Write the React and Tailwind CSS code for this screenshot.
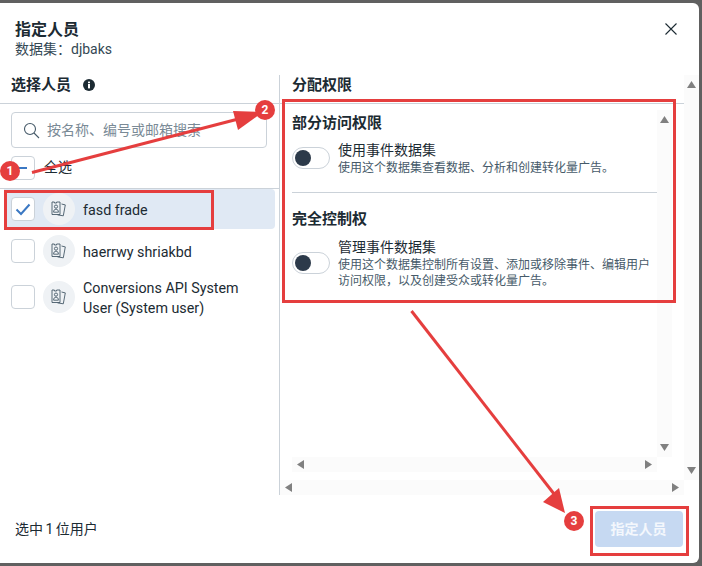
import React from 'react';

const FONT = 'font-["Roboto","Noto_Sans_CJK_SC",sans-serif]';

function PersonIcon() {
  return (
    <svg width="16" height="16" viewBox="0 0 16 16" fill="none" stroke="#465a69" strokeWidth="0.9">
      <path d="M1 1h2.4v1h2.2V1H9v12.5H1z" />
      <circle cx="5" cy="5.6" r="1.6" />
      <path d="M2.6 11.2c0-2 .9-3 2.4-3s2.4 1 2.4 3z" />
      <path d="M10.5 3l3.8.9-2 10.9-5.8-.9" />
    </svg>
  );
}

function Avatar() {
  return (
    <div className="flex h-8 w-8 shrink-0 items-center justify-center rounded-full bg-[#eff2f5]">
      <PersonIcon />
    </div>
  );
}

function Box({ children }) {
  return (
    <div className="flex h-6 w-6 shrink-0 items-center justify-center rounded border border-[#cbd2d9] bg-white">
      {children}
    </div>
  );
}

function Tick() {
  return (
    <svg width="16" height="16" viewBox="0 0 16 16" fill="none" stroke="#3b78c3" strokeWidth="2">
      <path d="M1.5 8.5l4.5 4.5 8.5-9.5" />
    </svg>
  );
}

function Toggle() {
  return (
    <div className="flex h-[22px] w-[38px] shrink-0 items-center rounded-full border border-[#cbd2d9] bg-white pl-[2px]">
      <div className="h-4 w-4 rounded-full bg-[#2c3a4a]" />
    </div>
  );
}

function Arrow({ dir }) {
  const d = {
    up: 'M0 8L4.5 1 9 8z',
    down: 'M0 1h9L4.5 8z',
    left: 'M8 0v9L1 4.5z',
    right: 'M1 0v9l7-4.5z',
  }[dir];
  return (
    <svg width="9" height="9" viewBox="0 0 9 9" fill="#808080">
      <path d={d} />
    </svg>
  );
}

function VBar({ className }) {
  return (
    <div className={`flex w-[15px] shrink-0 flex-col items-center justify-between bg-[#fbfbfb] py-[5px] ${className}`}>
      <Arrow dir="up" />
      <Arrow dir="down" />
    </div>
  );
}

function HBar({ className }) {
  return (
    <div className={`flex h-[15px] shrink-0 items-center justify-between bg-[#fbfbfb] px-[4px] ${className}`}>
      <Arrow dir="left" />
      <Arrow dir="right" />
    </div>
  );
}

function Permission({ title, desc }) {
  return (
    <div className="flex items-center gap-2">
      <Toggle />
      <div className="w-[319px]">
        <div className="text-[14px] leading-5 text-[#1c2b33]">{title}</div>
        <div className="text-[12px] leading-4 text-[#465a69]">{desc}</div>
      </div>
    </div>
  );
}

export default function App() {
  return (
    <div className={`relative h-[566px] w-[702px] overflow-hidden bg-[#606060] pb-[3px] pr-[3px] pt-[3px] ${FONT}`}>
      <div className="flex h-[560px] w-[699px] flex-col rounded-r-md bg-white text-[#1c2b33]">
        <div className="flex h-[72px] shrink-0 items-start justify-between pl-[15px] pr-[21px] pt-[17px]">
          <div>
            <div className="text-[16px] font-bold leading-5">指定人员</div>
            <div className="text-[14px] leading-[18px] text-[#344854]">数据集：djbaks</div>
          </div>
          <svg className="mt-[2px]" width="14" height="14" viewBox="0 0 14 14" stroke="#1c2b33" strokeWidth="1.1">
            <path d="M1.5 1.5l11 11M12.5 1.5l-11 11" />
          </svg>
        </div>

        <div className="flex h-[420px] shrink-0">
          <div className="w-[280px] shrink-0 border-r border-[#cbd2d9]">
            <div className="flex h-[29px] items-center gap-[12px] border-b border-[#cbd2d9] pb-[8px] pl-[11px]">
              <span className="text-[15px] font-bold leading-5">选择人员</span>
              <svg width="12" height="12" viewBox="0 0 12 12">
                <circle cx="6" cy="6" r="6" fill="#1c2b33" />
                <rect x="5" y="5" width="2" height="4.4" fill="#fff" />
                <rect x="5" y="2.6" width="2" height="1.6" fill="#fff" />
              </svg>
            </div>
            <div className="mx-[11px] mt-2 flex h-9 w-[256px] items-center gap-[7px] rounded border border-[#cbd2d9] pl-[11px]">
              <svg width="17" height="17" viewBox="0 0 17 17" fill="none" stroke="#465a69" strokeWidth="1.1">
                <circle cx="7" cy="7" r="5.5" />
                <path d="M11 11l5 5" />
              </svg>
              <span className="text-[14px] text-[#7a8a96]">按名称、编号或邮箱搜索</span>
            </div>
            <div className="flex h-[41px] items-center gap-[9px] border-b border-[#cbd2d9] pb-[1px] pl-[11px]">
              <Box>
                <div className="h-[2px] w-[8px] bg-[#3b78c3]" />
              </Box>
              <span className="text-[14px]">全选</span>
            </div>

            <div className="ml-1 mr-1 flex h-10 items-center gap-2 rounded-r bg-[#e0e9f4] pl-[7px]">
              <Box>
                <Tick />
              </Box>
              <Avatar />
              <span className="pt-[1px] text-[14.3px] leading-5">fasd frade</span>
            </div>
            <div className="flex h-[43px] items-center gap-2 pl-[11px] pt-[1px]">
              <Box />
              <Avatar />
              <span className="pt-[1px] text-[14.3px] leading-5">haerrwy shriakbd</span>
            </div>
            <div className="flex h-[50px] items-center gap-2 pl-[11px]">
              <Box />
              <Avatar />
              <span className="w-[180px] pt-[1px] text-[14.3px] leading-5">Conversions API System User (System user)</span>
            </div>
          </div>

          <div className="flex min-w-0 flex-1 flex-col">
            <div className="flex min-h-0 flex-1">
              <div className="flex w-[404px] shrink-0 flex-col">
                <div className="flex h-[29px] shrink-0 items-center border-b border-[#cbd2d9] pb-[8px] pl-3 text-[15px] font-bold leading-5">
                  分配权限
                </div>
                <div className="flex min-h-0 flex-1 pl-3 pt-[6px]">
                  <div className="flex min-w-0 flex-1 flex-col">
                    <div className="flex min-h-0 flex-1">
                      <div className="w-[365px] shrink-0">
                        <div className="border-b border-[#cbd2d9] pb-4 pt-[2px]">
                          <div className="mb-[6px] text-[15px] font-bold leading-[22px]">部分访问权限</div>
                          <Permission title="使用事件数据集" desc="使用这个数据集查看数据、分析和创建转化量广告。" />
                        </div>
                        <div className="pt-[15px]">
                          <div className="mb-[7px] text-[15px] font-bold leading-[22px]">完全控制权</div>
                          <Permission
                            title="管理事件数据集"
                            desc="使用这个数据集控制所有设置、添加或移除事件、编辑用户访问权限，以及创建受众或转化量广告。"
                          />
                        </div>
                      </div>
                      <VBar />
                    </div>
                    <HBar className="w-[365px]" />
                    <div className="h-2 shrink-0" />
                  </div>
                  <div className="w-3 shrink-0" />
                </div>
              </div>
              <VBar />
            </div>
            <HBar className="w-[404px]" />
          </div>
        </div>

        <div className="flex flex-1 items-center justify-between pl-[15px] pr-4">
          <span className="text-[14px] text-[#1c2b33] [word-spacing:-1px]">选中 1 位用户</span>
          <button
            type="button"
            className="h-9 w-[88px] rounded bg-[#c6d9f2] pr-[1px] text-[14px] font-semibold text-white/80"
          >
            指定人员
          </button>
        </div>
      </div>

      <div className="absolute left-1 top-[190px] h-10 w-[210px] border-[3px] border-[#e53e3e]" />
      <div className="absolute left-[282px] top-[99px] h-[204px] w-[394px] border-[3px] border-[#e53e3e]" />
      <div className="absolute left-[590px] top-[506px] h-[50px] w-[99px] border-[3px] border-[#e53e3e]" />

      <svg className="absolute left-0 top-0" width="702" height="566" fill="#e53e3e" stroke="none">
        <path d="M32 172.5L246 117" stroke="#e53e3e" strokeWidth="3" />
        <path d="M233 111L263 112 238 130z" />
        <path d="M411.5 311L558 499" stroke="#e53e3e" strokeWidth="3" />
        <path d="M543 502L559 488 565 513z" />
      </svg>

      <div className="absolute left-0 top-[161px] flex h-5 w-5 items-center justify-center rounded-full bg-[#e53e3e] text-[12px] font-bold text-white">1</div>
      <div className="absolute left-[255px] top-[100px] flex h-5 w-5 items-center justify-center rounded-full bg-[#e53e3e] text-[12px] font-bold text-white">2</div>
      <div className="absolute left-[564px] top-[511px] flex h-5 w-5 items-center justify-center rounded-full bg-[#e53e3e] text-[12px] font-bold text-white">3</div>
    </div>
  );
}
